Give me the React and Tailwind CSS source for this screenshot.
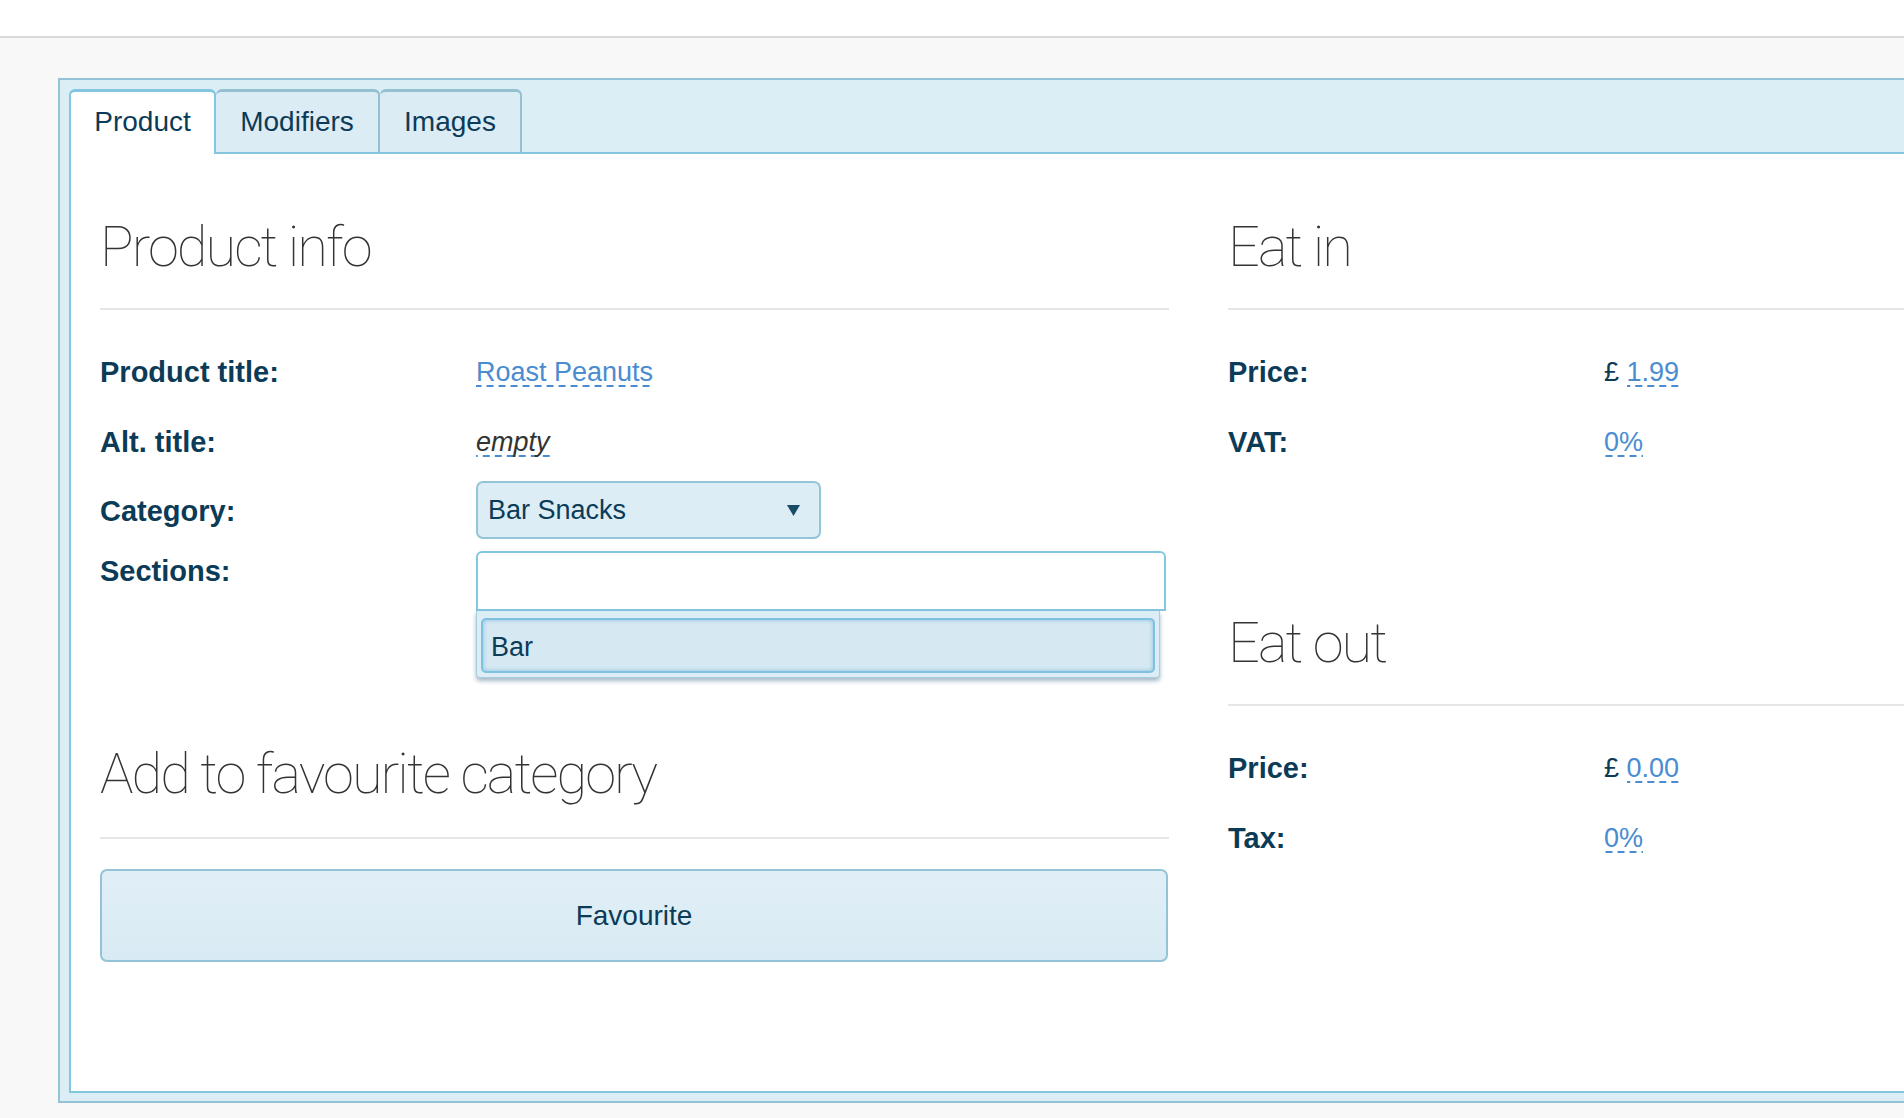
import React from "react";

const NAVY = "text-[#0c3b57]";

function Heading({ children }) {
  return (
    <div className="h-[60px] leading-[60px] text-[56px] font-thin text-[#333] font-['Roboto',sans-serif] tracking-[-0.035em] whitespace-nowrap">
      {children}
    </div>
  );
}

function Divider({ mt }) {
  return <div className={`${mt} h-[2px] bg-[#e6e6e6]`} />;
}

const dash =
  "bg-[linear-gradient(to_right,#4a8ccf_7px,transparent_7px)] bg-[length:12px_2px] bg-repeat-x bg-bottom";

function Link({ children, italic }) {
  return (
    <span className={`${dash} ${italic ? "italic text-[#333]" : "text-[#4a8ccf]"}`}>{children}</span>
  );
}

function Row({ label, children, className = "" }) {
  return (
    <div className={`grid grid-cols-[376px_1fr] h-[40px] leading-[40px] ${className}`}>
      <div className={`font-bold text-[29px] ${NAVY}`}>{label}</div>
      <div className="text-[27px]">{children}</div>
    </div>
  );
}

export default function App() {
  return (
    <div className={`w-[1904px] h-[1118px] overflow-hidden bg-[#f8f8f8] font-['Liberation_Sans',Arial,sans-serif] ${NAVY}`}>
      <div className="h-[38px] bg-white border-b-2 border-[#d9d9d9]" />
      <div className="pt-[40px] pl-[58px]">
        <div className="w-[2400px] border-2 border-[#93c3d4] bg-[#dbedf5] pt-[9px] pl-[9px] pb-[8px]">
          {/* tabs */}
          <div className="flex h-[65px] text-[28px]">
            <div className="w-[147px] h-[65px] bg-white border-t-[3px] border-l-2 border-r-2 border-[#84c5e0] rounded-t-[6px] text-center pt-[14px] leading-[32px]">
              Product
            </div>
            <div className="w-[164px] h-[65px] bg-[#dcecf4] border-t-[3px] border-r-2 border-[#95c0d1] rounded-t-[6px] text-center pt-[14px] leading-[32px] relative">
              <span>Modifiers</span>
              <div className="absolute left-0 right-[-2px] bottom-0 h-[2px] bg-[#84c5e0]" />
            </div>
            <div className="w-[142px] h-[65px] bg-[#dcecf4] border-t-[3px] border-r-2 border-[#95c0d1] rounded-t-[6px] text-center pt-[14px] leading-[32px] relative">
              <span>Images</span>
              <div className="absolute left-0 right-[-2px] bottom-0 h-[2px] bg-[#84c5e0]" />
            </div>
            <div className="flex-1 border-b-2 border-[#84c5e0]" />
          </div>
          {/* panel */}
          <div className="h-[939px] bg-white border-l-2 border-b-2 border-r-2 border-[#84c5e0] pl-[29px] pt-[63px] flex gap-[59px]">
            {/* left column */}
            <div className="w-[1069px]">
              <Heading>Product info</Heading>
              <Divider mt="mt-[31px]" />
              <Row label="Product title:" className="mt-[42px]">
                <Link>Roast Peanuts</Link>
              </Row>
              <Row label="Alt. title:" className="mt-[30px]">
                <Link italic>empty</Link>
              </Row>
              <div className="mt-[19px] grid grid-cols-[376px_1fr] items-center">
                <div className="font-bold text-[29px] leading-[40px] mt-[2px]">Category:</div>
                <div className="w-[345px] h-[58px] rounded-[7px] border-2 border-[#94c4d6] bg-[#dcedf5] flex items-center justify-between pl-[10px] pr-[19px] text-[27px]">
                  <span>Bar Snacks</span>
                  <svg width="13" height="11" viewBox="0 0 13 11">
                    <polygon points="0,0 13,0 6.5,11" fill="#1a4b66" />
                  </svg>
                </div>
              </div>
              <div className="mt-[12px] grid grid-cols-[376px_1fr] items-start">
                <div className="font-bold text-[29px] leading-[40px]">Sections:</div>
                <div className="relative w-[690px]">
                  <div className="h-[60px] bg-white border-2 border-[#84c5e0] rounded-t-[6px]" />
                  <div className="absolute left-0 right-[6px] top-full bg-[#dcedf5] border border-t-0 border-[#a9cddc] rounded-b-[4px] px-[4px] pt-[7px] pb-[4px] shadow-[0_3px_4px_rgba(50,100,130,0.45)]">
                    <div className="h-[55px] rounded-[5px] border-2 border-[#7fc1e0] bg-[#d6e9f3] shadow-[inset_0_0_4px_rgba(80,160,210,0.6)] flex items-center pl-[8px] pt-[3px] leading-[32px] text-[27px]">
                      Bar
                    </div>
                  </div>
                </div>
              </div>
              <div className="mt-[133px]">
                <Heading>Add to favourite category</Heading>
              </div>
              <Divider mt="mt-[33px]" />
              <button className="mt-[30px] w-[1068px] h-[93px] rounded-[7px] border-2 border-[#93c3d4] bg-[linear-gradient(to_bottom,#e1eff7,#d8eaf3)] text-[28px] text-[#0c3b57] flex items-center justify-center">
                Favourite
              </button>
            </div>
            {/* right column */}
            <div className="w-[1069px]">
              <Heading>Eat in</Heading>
              <Divider mt="mt-[31px]" />
              <Row label="Price:" className="mt-[42px]">
                <span>£ </span>
                <Link>1.99</Link>
              </Row>
              <Row label="VAT:" className="mt-[30px]">
                <Link>0%</Link>
              </Row>
              <div className="mt-[151px]">
                <Heading>Eat out</Heading>
              </div>
              <Divider mt="mt-[31px]" />
              <Row label="Price:" className="mt-[42px]">
                <span>£ </span>
                <Link>0.00</Link>
              </Row>
              <Row label="Tax:" className="mt-[30px]">
                <Link>0%</Link>
              </Row>
            </div>
          </div>
        </div>
      </div>
    </div>
  );
}
